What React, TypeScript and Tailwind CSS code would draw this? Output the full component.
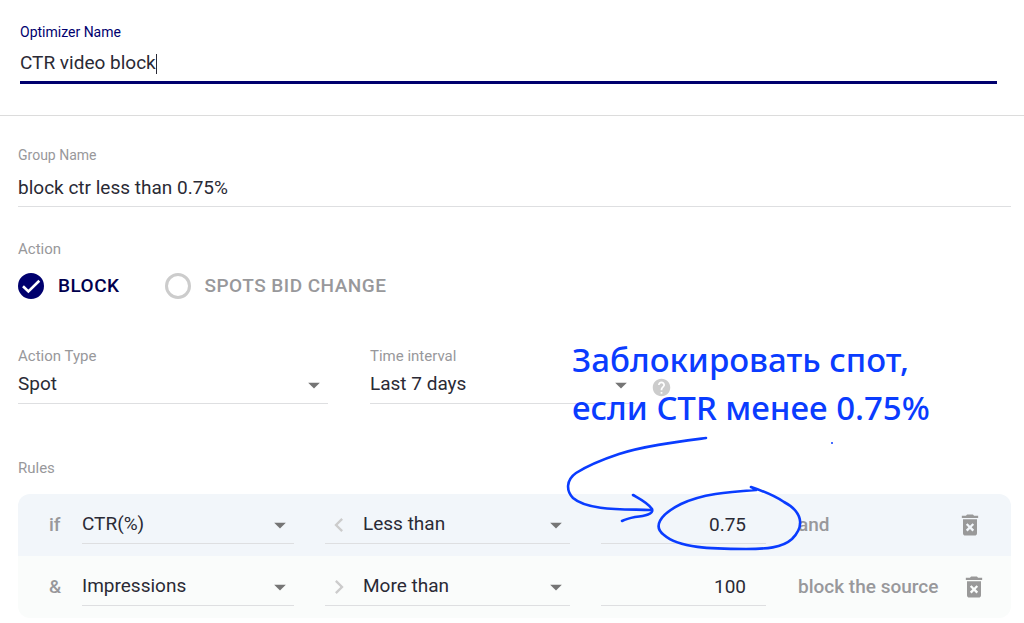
import React, { useState } from 'react';
import { clsx } from 'clsx';
import { MdArrowDropDown, MdChevronLeft, MdChevronRight, MdDeleteForever, MdHelp } from 'react-icons/md';

interface SelectProps {
    id?: string;
    label?: string;
    value: string;
    options: string[];
    icon?: React.ReactNode;
    onChange: (value: string) => void;
}

interface Rule {
    id: number;
    prefix: string;
    metric: string;
    operator: string;
    amount: string;
    suffix: string;
}

const initialRules: Rule[] = [
    { id: 1, prefix: 'if', metric: 'CTR(%)', operator: 'Less than', amount: '0.75', suffix: 'and' },
    { id: 2, prefix: '&', metric: 'Impressions', operator: 'More than', amount: '100', suffix: 'block the source' },
];

const actions = ['BLOCK', 'SPOTS BID CHANGE'];

function Select({ id, label, value, options, icon, onChange }: SelectProps) {
    return (
        <div className="relative flex h-[38px] min-w-0 items-center border-b border-[#dedfe1]">
            {icon}
            <select
                id={id}
                aria-label={label}
                value={value}
                onChange={(e) => onChange(e.target.value)}
                className="h-full w-full min-w-0 appearance-none bg-transparent pr-8 outline-none"
            >
                {options.map((option) => (
                    <option key={option}>{option}</option>
                ))}
            </select>
            <MdArrowDropDown size={28} className="pointer-events-none absolute right-0 top-1/2 -translate-y-1/2 text-[#757575]" />
        </div>
    );
}

// Hand-drawn note that points at the CTR threshold
function Annotation() {
    return (
        <div className="pointer-events-none absolute left-[560px] top-[336px] w-[400px] text-[#0a3cff]">
            <p className="whitespace-nowrap pl-3 font-['Noto_Sans',sans-serif] text-[33px] font-medium leading-[48px]">
                Заблокировать спот,
                <br />
                если CTR менее 0.75%
            </p>
            <svg width="280" height="126" viewBox="560 432 280 126" fill="none" stroke="currentColor" strokeWidth="2.6" strokeLinecap="round" strokeLinejoin="round">
                <path d="M706 438C676 442 644 446 619 454C601 460 587 466 576 473C566 480 566 491 573 498C588 511 625 509 650 510" />
                <path d="M633 495C640 499 648 503 652 509C654 514 645 516 635 517C630 518 626 519 622 521" />
                <path d="M751 487L756 490C727 492 702 494 681 504C659 515 653 527 664 535C679 548 711 549 746 549C766 549 782 548 792 539C806 525 801 511 784 502C775 496 763 491 751 487" />
                <circle cx="832" cy="443" r="1" fill="currentColor" stroke="none" />
            </svg>
        </div>
    );
}

export default function App() {
    const [name, setName] = useState('CTR video block');
    const [group, setGroup] = useState('block ctr less than 0.75%');
    const [action, setAction] = useState('BLOCK');
    const [actionType, setActionType] = useState('Spot');
    const [interval, setInterval] = useState('Last 7 days');
    const [rules, setRules] = useState<Rule[]>(initialRules);

    const updateRule = (id: number, changes: Partial<Rule>) => {
        setRules(rules.map((rule) => (rule.id === id ? { ...rule, ...changes } : rule)));
    };

    return (
        <main className="relative min-h-screen bg-white font-[Roboto,sans-serif] text-[19px] text-[#2a2a35]">
            {/* Optimizer name */}
            <section className="border-b border-[#dcdcdc] pb-[31px] pl-5 pr-[27px] pt-[22px]">
                <label htmlFor="optimizer-name" className="block text-sm leading-5 text-[#00006e]">Optimizer Name</label>
                <div className="mt-1 flex h-[38px] items-center border-b-[3px] border-[#00006e]">
                    <input
                        id="optimizer-name"
                        value={name}
                        onChange={(e) => setName(e.target.value)}
                        className="field-sizing-content max-w-full caret-transparent outline-none"
                    />
                    <span className="h-5 w-px bg-[#2a2a35]" />
                </div>
            </section>

            <section className="pb-1.5 pl-[18px] pr-[13px] pt-[29px]">
                {/* Group name */}
                <label htmlFor="group-name" className="block text-sm leading-5 text-[#98989b]">Group Name</label>
                <input
                    id="group-name"
                    value={group}
                    onChange={(e) => setGroup(e.target.value)}
                    className="mt-1 h-[38px] w-full border-b border-[#dedfe1] outline-none"
                />

                {/* Action */}
                <fieldset className="mt-8">
                    <legend className="text-[15px] leading-5 text-[#98989b]">Action</legend>
                    <div className="flex gap-[45px] pt-3">
                        {actions.map((item) => (
                            <label
                                key={item}
                                className={clsx('flex h-[30px] items-center gap-3.5 font-medium tracking-wide', action === item ? 'text-[#00004e]' : 'text-[#98989b]')}
                            >
                                <span className="grid size-[26px] place-items-center">
                                    <input
                                        type="radio"
                                        name="action"
                                        checked={action === item}
                                        onChange={() => setAction(item)}
                                        className="col-start-1 row-start-1 size-[26px] appearance-none rounded-full border-[3px] border-[#cccccc] checked:border-[#00006e] checked:bg-[#00006e]"
                                    />
                                    {action === item && (
                                        <svg width="26" height="26" viewBox="0 0 26 26" fill="none" className="pointer-events-none col-start-1 row-start-1">
                                            <path d="M5 13.3L10.4 18.5L21.3 7.8" stroke="white" strokeWidth="2.6" />
                                        </svg>
                                    )}
                                </span>
                                {item}
                            </label>
                        ))}
                    </div>
                </fieldset>

                {/* Type and interval */}
                <div className="mt-[45px] flex">
                    <div className="w-[310px]">
                        <label htmlFor="action-type" className="block text-[15px] leading-5 text-[#98989b]">Action Type</label>
                        <Select id="action-type" value={actionType} options={['Spot', 'Campaign']} onChange={setActionType} />
                    </div>
                    <div className="ml-[42px] w-[265px]">
                        <label htmlFor="interval" className="block text-[15px] leading-5 text-[#98989b]">Time interval</label>
                        <Select id="interval" value={interval} options={['Last 7 days', 'Last 30 days']} onChange={setInterval} />
                    </div>
                    <button type="button" aria-label="Help" className="ml-4 self-end pb-1.5 text-[#cccccc]">
                        <MdHelp size={21} />
                    </button>
                </div>

                {/* Rules */}
                <h2 className="mt-[54px] text-[15px] leading-5 text-[#98989b]">Rules</h2>
                <div className="mt-4 overflow-hidden rounded-xl">
                    {rules.map((rule) => (
                        <div key={rule.id} className="flex h-[62px] items-center odd:bg-[#f2f6fa] even:bg-[#fafcfb]">
                            <span className="w-16 shrink-0 pl-[31px] font-medium text-[#98989b]">{rule.prefix}</span>
                            <div className="grid min-w-0 flex-1 grid-cols-[212fr_245fr_165fr] gap-x-[31px]">
                                <Select
                                    label="Metric"
                                    value={rule.metric}
                                    options={['CTR(%)', 'Impressions']}
                                    onChange={(metric) => updateRule(rule.id, { metric })}
                                />
                                <Select
                                    label="Condition"
                                    value={rule.operator}
                                    options={['Less than', 'More than']}
                                    onChange={(operator) => updateRule(rule.id, { operator })}
                                    icon={
                                        rule.operator === 'Less than'
                                            ? <MdChevronLeft size={28} className="mr-2.5 shrink-0 text-[#cccccc]" />
                                            : <MdChevronRight size={28} className="mr-2.5 shrink-0 text-[#cccccc]" />
                                    }
                                />
                                <input
                                    aria-label="Value"
                                    value={rule.amount}
                                    onChange={(e) => updateRule(rule.id, { amount: e.target.value })}
                                    className="h-[38px] min-w-0 border-b border-[#dedfe1] pr-5 text-right outline-none"
                                />
                            </div>
                            <div className="ml-8 flex w-[213px] shrink-0 items-center gap-[22px]">
                                <span className="min-w-[136px] whitespace-nowrap font-medium text-[#98989b]">{rule.suffix}</span>
                                <button
                                    type="button"
                                    aria-label="Delete rule"
                                    onClick={() => setRules(rules.filter((r) => r.id !== rule.id))}
                                    className="text-[#999999]"
                                >
                                    <MdDeleteForever size={28} />
                                </button>
                            </div>
                        </div>
                    ))}
                </div>
            </section>

            <Annotation />
        </main>
    );
}
